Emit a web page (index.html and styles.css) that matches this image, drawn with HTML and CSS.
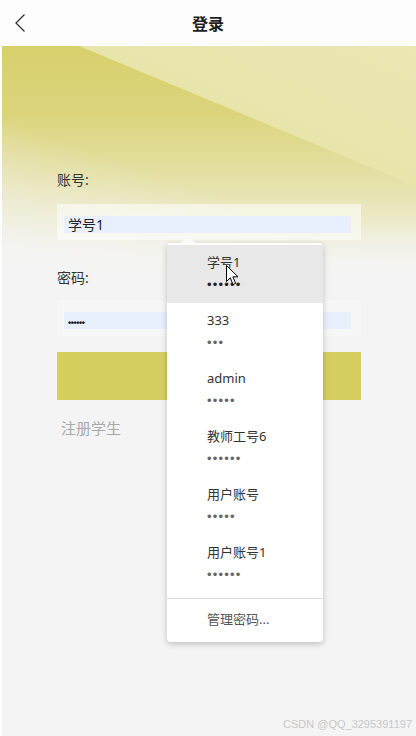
FILE: index.html
```html
<!DOCTYPE html>
<html lang="zh-CN">
<head>
<meta charset="utf-8">
<title>登录</title>
<link rel="stylesheet" href="styles.css">
</head>
<body>
<div class="topbar">
  <svg class="back" width="40" height="46" viewBox="0 0 40 46"><path d="M24.5 14.5 L16 23 L24.5 31.5"/></svg>
  <span class="title">登录</span>
  <span></span>
</div>
<div class="page">
  <div class="form">
    <div class="label">账号:</div>
    <div class="field"><span class="fill">学号1</span></div>
    <div class="label second">密码:</div>
    <div class="field pw"><span class="fill"><span class="mask">••••••</span></span></div>
    <div class="btn"></div>
    <div class="reg">注册学生</div>
  </div>

  <!-- autofill popup -->
  <div class="popup">
    <div class="item on"><div class="name">学号1</div><div class="dots">••••••</div></div>
    <div class="item"><div class="name">333</div><div class="dots">•••</div></div>
    <div class="item"><div class="name">admin</div><div class="dots">•••••</div></div>
    <div class="item"><div class="name">教师工号6</div><div class="dots">••••••</div></div>
    <div class="item"><div class="name">用户账号</div><div class="dots">•••••</div></div>
    <div class="item"><div class="name">用户账号1</div><div class="dots">••••••</div></div>
    <div class="manage">管理密码...</div>
    <svg class="cursor" width="13" height="21" viewBox="0 0 13 21"><path d="M0.5 0.5 L0.5 16.5 L4.3 12.8 L7 19.5 L9.6 18.4 L6.9 11.8 L12 11.8 Z"/></svg>
  </div>

  <div class="mark">CSDN @QQ_3295391197</div>
</div>
</body>
</html>
```

FILE: styles.css
```css
* { box-sizing: border-box; }
body { margin: 0; background: #fdfdfd; font-family: "Noto Sans", "Noto Sans CJK SC", sans-serif; color: #333; }

.topbar { height: 46px; display: grid; grid-template-columns: 40px 1fr 40px; align-items: center; background: #fdfdfd; }
.back { display: block; }
.back path { fill: none; stroke: #333; stroke-width: 1.3; }
.title { text-align: center; font-size: 16px; font-weight: bold; color: #1e1e1e; }

.page {
  position: relative;
  margin-left: 2px;
  min-height: 690px;
  background-color: #f4f4f4;
  background-image:
    linear-gradient(to bottom, rgba(244,244,244,0) 0, rgba(244,244,244,0) 75%, #f4f4f4 100%),
    linear-gradient(200deg, rgba(244,244,244,0) 0, rgba(244,244,244,0) 58%, rgba(244,244,244,.7) 92%, rgba(244,244,244,.85) 100%),
    linear-gradient(202.6deg, #ece7b3 0, #e9e4aa 129px, rgba(236,231,179,0) 130px),
    linear-gradient(to bottom, #d8d06c 0, #dbd47b 28%, #e5e1a8 58%, #efedd4 82%, #f4f4f4 100%);
  background-size: 100% 232px;
  background-repeat: no-repeat;
}

.form { padding: 124px 55px 0 55px; }
.label { font-size: 14px; line-height: 20px; color: #333; }
.label.second { margin-top: 28px; }
.field { margin-top: 14px; height: 36px; padding: 12px 10px 0 7px; background: rgba(255,255,255,.55); }
.field.pw { margin-top: 12px; background: rgba(255,255,255,.25); }
.fill { display: block; height: 17px; line-height: 17px; padding-left: 4px; background: #e8f0fe; font-size: 14px; color: #222; }
.mask { font-family: "Liberation Sans", sans-serif; font-size: 9px; font-weight: bold; letter-spacing: -0.4px; color: #111; }

.btn { margin-top: 16px; height: 48px; background: #d6cf60; }
.reg { margin-top: 18px; padding-left: 4px; line-height: 20px; font-size: 15px; color: #a9a9a9; }

.popup {
  position: absolute;
  left: 165px;
  top: 197px;
  width: 156px;
  padding-top: 2px;
  background: #fff;
  border-radius: 4px;
  box-shadow: 0 2px 6px rgba(0,0,0,.22);
}
.popup::before {
  content: "";
  position: absolute;
  left: 13px;
  top: -7px;
  border-left: 8px solid transparent;
  border-right: 8px solid transparent;
  border-bottom: 7px solid #fafafa;
}
.item { padding: 7px 0 8px 40px; }
.item.on { background: #e8e8e8; }
.name { font-size: 13px; line-height: 20px; color: #333; }
.dots { margin-top: 3px; font-family: "Liberation Sans", sans-serif; font-size: 13px; line-height: 20px; letter-spacing: 1.2px; color: #666; }
.item.on .dots { color: #222; }
.manage { margin-top: 5px; border-top: 1px solid #dcdcdc; padding: 10px 0 13px 40px; font-size: 13px; line-height: 20px; color: #555; }
.cursor { position: absolute; left: 59px; top: 22px; }
.cursor path { fill: #fff; stroke: #000; stroke-width: 1; }

.mark { position: absolute; right: 4px; bottom: 6px; font-family: "Liberation Sans", sans-serif; font-size: 11px; color: #c8c8c8; }
```
